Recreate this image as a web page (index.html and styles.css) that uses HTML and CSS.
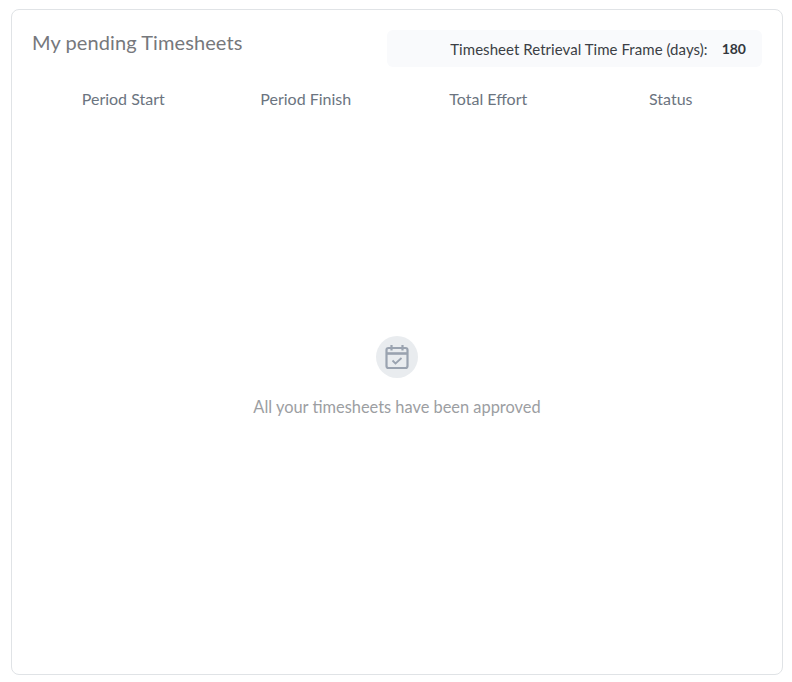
FILE: index.html
```html
<!DOCTYPE html>
<html lang="en">
<head>
<meta charset="utf-8">
<title>My pending Timesheets</title>
<link rel="stylesheet" href="styles.css">
</head>
<body>
<section class="card">
  <header class="card-head">
    <h2 class="title">My pending Timesheets</h2>
    <div class="frame">
      <span class="frame-label">Timesheet Retrieval Time Frame (days):</span>
      <span class="frame-value">180</span>
    </div>
  </header>
  <div class="columns">
    <div class="col">Period Start</div>
    <div class="col">Period Finish</div>
    <div class="col">Total Effort</div>
    <div class="col">Status</div>
  </div>
  <div class="empty">
    <div class="empty-icon">
      <svg width="26" height="26" viewBox="0 0 26 26" fill="none" stroke="#9aa3b0" stroke-width="2.2">
        <rect x="2.5" y="4" width="21" height="20" rx="2"/>
        <path d="M2.5 9.5h21" stroke-width="2.6"/>
        <path d="M7.5 1v5.5M18.5 1v5.5"/>
        <path d="M8.5 16.5l3 3 6-5.5" stroke-width="1.8"/>
      </svg>
    </div>
    <p class="empty-text">All your timesheets have been approved</p>
  </div>
</section>
</body>
</html>
```

FILE: styles.css
```css
* { box-sizing: border-box; }
html, body { margin: 0; background: #fff; }
body {
  padding: 9px 9px 7px 11px;
  font-family: "Lato", "Liberation Sans", sans-serif;
}
.card {
  height: 666px;
  border: 1px solid #e0e3e6;
  border-radius: 8px;
  padding: 20px 20px 0 20px;
  display: flex;
  flex-direction: column;
}
.card-head {
  display: flex;
  justify-content: space-between;
  align-items: flex-start;
}
.title {
  margin: 0;
  font-size: 20px;
  line-height: 25px;
  font-weight: 400;
  letter-spacing: 0.09px;
  color: #76787c;
}
.frame {
  width: 375px;
  height: 37px;
  background: #f9fafc;
  border-radius: 6px;
  display: flex;
  justify-content: flex-end;
  align-items: center;
  gap: 14px;
  padding-right: 16px;
}
.frame-label { font-size: 15px; letter-spacing: 0.05px; color: #3b3f45; }
.frame-value { font-size: 14px; font-weight: 700; color: #33373d; }
.columns {
  display: grid;
  grid-template-columns: repeat(4, 1fr);
  margin-top: 21px;
}
.col {
  text-align: center;
  font-size: 16px;
  line-height: 22px;
  color: #6b7480;
}
.empty {
  margin-top: 226px;
  display: flex;
  flex-direction: column;
  align-items: center;
  gap: 18px;
  margin-right: 1px;
}
.empty-icon {
  width: 42px;
  height: 42px;
  border-radius: 50%;
  background: #e9ecef;
  display: flex;
  align-items: center;
  justify-content: center;
}
.empty-text {
  margin: 0;
  padding-left: 1px;
  font-size: 16.4px;
  line-height: 22px;
  color: #9c9ea2;
}
```
